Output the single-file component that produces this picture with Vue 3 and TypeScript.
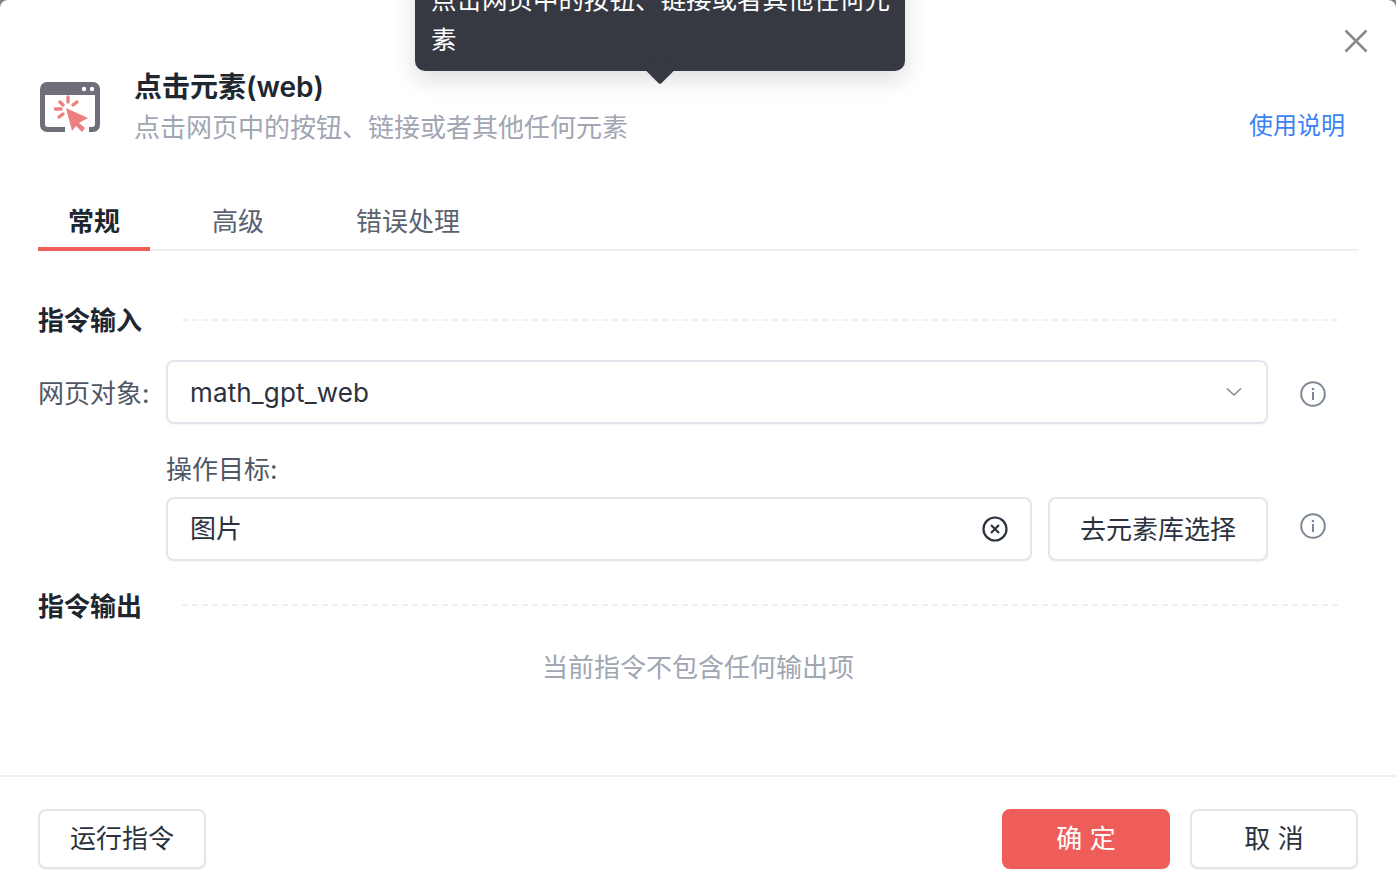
<script setup lang="ts">
const tabs = ['常规', '高级', '错误处理']
</script>

<template>
  <div class="dialog">
    <button class="close" aria-label="关闭">
      <svg viewBox="0 0 24 24" width="24" height="24">
        <path d="M1.5 1.5L22.5 22.5M22.5 1.5L1.5 22.5" stroke="#8a8a8a" stroke-width="2.6" fill="none" />
      </svg>
    </button>

    <div class="tooltip">
      <div class="tooltip-text">点击网页中的按钮、链接或者其他任何元素</div>
      <span class="tooltip-arrow"></span>
    </div>

    <header class="head">
      <svg class="logo" viewBox="0 0 60 50" width="60" height="50">
        <path d="M7 0H53A7 7 0 0 1 60 7V43A7 7 0 0 1 53 50H49V45H52A3 3 0 0 0 55 42V13H5V42A3 3 0 0 0 8 45H25V50H7A7 7 0 0 1 0 43V7A7 7 0 0 1 7 0Z" fill="#6f6f79" />
        <circle cx="44" cy="7" r="2.2" fill="#fff" />
        <circle cx="52" cy="7" r="2.2" fill="#fff" />
        <path d="M26 26L48 36L39 41L45 46L42 50L36 44L32 49Z" fill="#ec8080" />
        <path d="M28 15V20M20 20L23 23M37 20L33 23M15.500 27H21M19 35L23 32" stroke="#ec8080" stroke-width="3.400" stroke-linecap="round" fill="none" />
      </svg>
      <div class="head-text">
        <div class="title">点击元素(web)</div>
        <div class="desc">点击网页中的按钮、链接或者其他任何元素</div>
      </div>
      <a class="help">使用说明</a>
    </header>

    <nav class="tabs">
      <div v-for="(t, i) in tabs" :key="t" class="tab" :class="{ active: i === 0 }">{{ t }}</div>
    </nav>

    <section class="section-title first">
      <span>指令输入</span>
      <i class="dash"></i>
    </section>

    <div class="row">
      <label class="row-label">网页对象:</label>
      <div class="field select">
        <span class="value">math_gpt_web</span>
        <svg viewBox="0 0 16 10" width="16" height="10">
          <path d="M1 1.5L8 8L15 1.5" stroke="#7d8396" stroke-width="1.4" fill="none" />
        </svg>
      </div>
      <svg class="info down" viewBox="0 0 26 26" width="26" height="26">
        <circle cx="13" cy="13" r="11.8" stroke="#7b8794" stroke-width="2" fill="none" />
        <circle cx="13" cy="8" r="1.3" fill="#7b8794" />
        <path d="M13 11V19" stroke="#7b8794" stroke-width="2" />
      </svg>
    </div>

    <div class="target">
      <div class="target-label">操作目标:</div>
      <div class="target-row">
        <div class="field grow">
          <span class="cn">图片</span>
          <svg viewBox="0 0 26 26" width="26" height="26">
            <circle cx="13" cy="13" r="11.5" stroke="#2b3340" stroke-width="2.200" fill="none" />
            <path d="M9 9L17 17M17 9L9 17" stroke="#2b3340" stroke-width="2.200" />
          </svg>
        </div>
        <button class="btn pick">去元素库选择</button>
        <svg class="info up" viewBox="0 0 26 26" width="26" height="26">
          <circle cx="13" cy="13" r="11.8" stroke="#7b8794" stroke-width="2" fill="none" />
          <circle cx="13" cy="8" r="1.3" fill="#7b8794" />
          <path d="M13 11V19" stroke="#7b8794" stroke-width="2" />
        </svg>
      </div>
    </div>

    <section class="section-title second">
      <span>指令输出</span>
      <i class="dash"></i>
    </section>

    <div class="empty">当前指令不包含任何输出项</div>

    <footer class="foot">
      <button class="btn run">运行指令</button>
      <div class="foot-right">
        <button class="btn primary">确 定</button>
        <button class="btn cancel">取 消</button>
      </div>
    </footer>
  </div>
</template>

<style>
html, body {
  margin: 0;
  background: #808080;
  overflow: hidden;
}
</style>

<style scoped>
.dialog {
  position: relative;
  width: 1396px;
  height: 892px;
  background: #fff;
  border-radius: 8px 8px 0 0;
  overflow: hidden;
  font-family: "Inter", "Noto Sans CJK SC", sans-serif;
  color: #2b323d;
  display: flex;
  flex-direction: column;
  box-sizing: border-box;
}

.close {
  position: absolute;
  top: 29px;
  right: 28px;
  padding: 0;
  border: 0;
  background: none;
  height: 24px;
}

.tooltip {
  position: absolute;
  left: 415px;
  top: -30px;
  width: 490px;
  height: 101px;
  box-sizing: border-box;
  padding: 10px 16px;
  background: #363941;
  border-radius: 0 0 10px 10px;
  box-shadow: 0 8px 24px rgba(0, 0, 0, 0.14);
  color: #fff;
  font-size: 25.5px;
  line-height: 40px;
  z-index: 2;
}

.tooltip-text {
  width: 462px;
}

.tooltip-arrow {
  position: absolute;
  left: 234px;
  bottom: -8.5px;
  width: 22px;
  height: 22px;
  transform: rotate(45deg);
  background: #363941;
  border-radius: 2px;
  z-index: -1;
}

.head {
  display: flex;
  align-items: flex-start;
  padding: 71px 51px 0 40px;
  height: 72px;
}

.logo {
  margin-top: 11px;
  overflow: visible;
}

.head-text {
  margin-left: 34px;
  flex: 1;
}

.title {
  font-size: 28px;
  font-weight: 600;
  line-height: 32px;
  color: #20262f;
}

.desc {
  margin-top: 8px;
  font-size: 26px;
  line-height: 34px;
  color: #a0a6b2;
}

.help {
  margin-top: 38px;
  font-size: 24px;
  line-height: 34px;
  color: #3b82f6;
}

.tabs {
  display: flex;
  margin: 37px 38px 0;
  height: 71px;
  border-bottom: 2px solid #eeeff1;
  box-sizing: border-box;
  width: 1320px;
}

.tab {
  padding: 25px 30px 0;
  line-height: 34px;
  font-size: 26px;
  height: 71px;
  box-sizing: border-box;
  color: #5a6270;
  margin-right: 32px;
}

.tab.active {
  font-weight: 700;
  color: #20262f;
  border-bottom: 4px solid #ee5d59;
}

.section-title {
  display: flex;
  align-items: center;
  margin: 0 58px 0 38px;
  font-size: 26px;
  font-weight: 600;
  line-height: 34px;
  color: #20262f;
}

.section-title.first {
  margin-top: 53px;
}

.section-title.second {
  margin-top: 28px;
}

.second span {
  position: relative;
  top: 1px;
}

.dash {
  flex: 1;
  margin-left: 40px;
  border-top: 2px dashed #eff0f2;
  margin-top: -2px;
}

.row {
  display: flex;
  align-items: center;
  margin: 22px 0 0 38px;
}

.row-label {
  width: 128px;
  padding-bottom: 2px;
  font-size: 26px;
  white-space: nowrap;
  color: #4f5764;
}

.field {
  height: 64px;
  box-sizing: border-box;
  border: 2px solid #e4e5ec;
  border-radius: 8px;
  padding: 0 22px;
  display: flex;
  align-items: center;
  justify-content: space-between;
  font-size: 26px;
  background: #fff;
  box-shadow: 0 1px 2px rgba(0, 0, 0, 0.04);
}

.value {
  letter-spacing: 0.15px;
}

.cn {
  padding-bottom: 6px;
}

.select {
  width: 1102px;
  padding-right: 24px;
}

.grow {
  width: 866px;
}

.info {
  margin-left: 32px;
}

.info.down {
  margin-top: 4px;
}

.info.up {
  margin-top: -6px;
}

.target {
  margin: 29px 0 0 166px;
}

.target-label {
  font-size: 26px;
  line-height: 34px;
  color: #4f5764;
}

.target-row {
  display: flex;
  align-items: center;
  margin-top: 10px;
}

.btn {
  box-sizing: border-box;
  border: 2px solid #e4e5ec;
  border-radius: 8px;
  background: #fff;
  font-family: inherit;
  font-size: 26px;
  color: #2b323d;
  box-shadow: 0 1px 2px rgba(0, 0, 0, 0.05);
  padding: 0 0 4px;
}

.pick {
  width: 220px;
  height: 64px;
  margin-left: 16px;
}

.empty {
  margin-top: 28px;
  text-align: center;
  font-size: 26px;
  line-height: 34px;
  color: #a0a6b2;
}

.foot {
  position: absolute;
  left: 0;
  right: 0;
  top: 775px;
  height: 117px;
  box-sizing: border-box;
  border-top: 2px solid #eeeff1;
  padding: 32px 38px 0;
  display: flex;
  justify-content: space-between;
  align-items: flex-start;
}

.foot-right {
  display: flex;
  gap: 20px;
}

.run, .primary, .cancel {
  width: 168px;
  height: 60px;
  padding-bottom: 6px;
}

.primary {
  background: #ee5d59;
  border-color: #ee5d59;
  color: #fff;
}
</style>
